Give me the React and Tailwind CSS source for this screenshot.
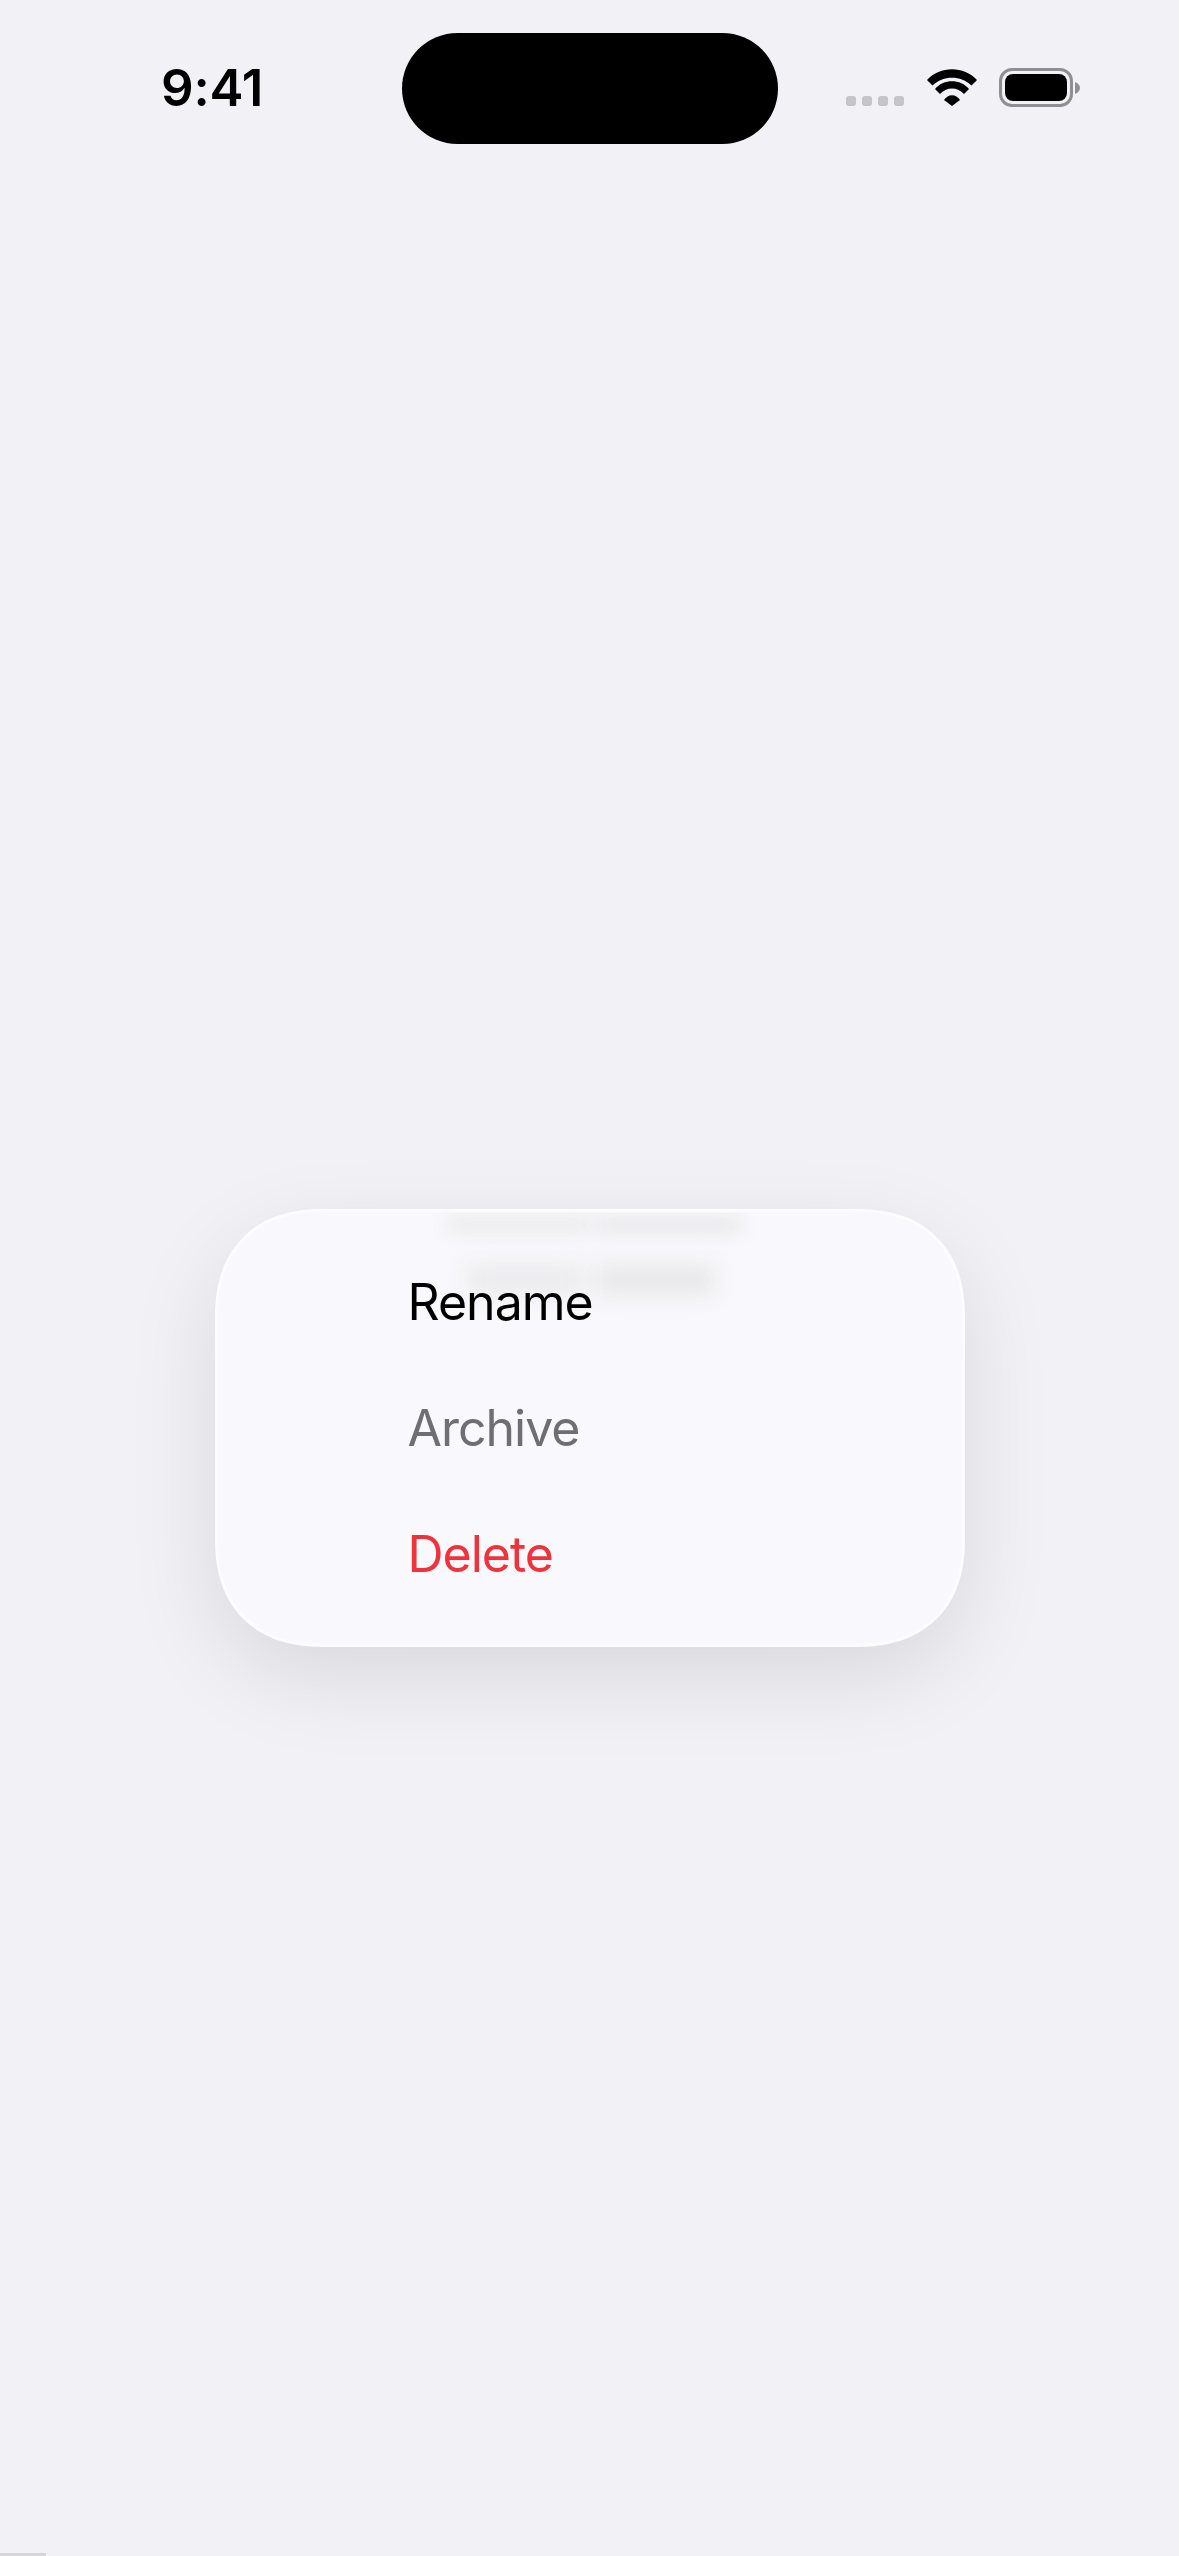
import React from 'react';

function Wifi() {
  return (
    <svg width="50" height="37" viewBox="0 0 50 37" fill="#000">
      <path d="M0 11 C13 -3.5 37 -3.5 50 11 L44.5 16.5 C34 6 16 6 5.5 16.5 Z" />
      <path d="M8 20 C16 9.5 34 9.5 42 20 L37 25 C31 17.5 19 17.5 13 25 Z" />
      <path d="M17 31 C21 24.5 29 24.5 33 31 L25 37 Z" />
    </svg>
  );
}

function Battery() {
  return (
    <div className="flex items-center gap-[2px]">
      <div className="w-[74px] h-[39px] rounded-[13px] border-[3px] border-[#8e8e93] p-[3px]">
        <div className="w-full h-full rounded-[8px] bg-black" />
      </div>
      <svg width="5" height="12" viewBox="0 0 5 12" fill="#8e8e93">
        <path d="M0 0 C3 1 5 3.5 5 6 C5 8.5 3 11 0 12 Z" />
      </svg>
    </div>
  );
}

function StatusBar() {
  return (
    <div className="h-[144px] flex items-start relative">
      <div className="ml-[161px] mt-[58px] text-[51px] leading-[60px] font-semibold text-black tracking-[-0.2px]">9:41</div>
      <div className="absolute left-[402px] top-[33px] w-[376px] h-[111px] rounded-[56px] bg-black" />
      <div className="absolute left-[846px] top-[68px] flex items-start">
        <div className="flex gap-[6px] mt-[28px] mr-[23px]">
          <div className="w-[10px] h-[10px] rounded-[3px] bg-[#c4c4c9]" />
          <div className="w-[10px] h-[10px] rounded-[3px] bg-[#c4c4c9]" />
          <div className="w-[10px] h-[10px] rounded-[3px] bg-[#c4c4c9]" />
          <div className="w-[10px] h-[10px] rounded-[3px] bg-[#c4c4c9]" />
        </div>
        <div className="mt-[1px]">
          <Wifi />
        </div>
        <div className="w-[22px]" />
        <Battery />
      </div>
    </div>
  );
}

export default function App() {
  return (
    <div className="w-[1179px] h-[2556px] overflow-hidden bg-[#f1f1f6] font-['Inter',sans-serif] flex flex-col">
      <StatusBar />
      <div className="flex justify-center pt-[1065px]">
        <div className="relative w-[750px] h-[438px] rounded-[108px] [corner-shape:superellipse(1.2)] border-[3px] border-[#fcfcfe] bg-[#f9f9fd] shadow-[0_30px_90px_rgba(0,0,0,0.1)] overflow-hidden">
          <div className="absolute left-[228px] top-[7px] w-[145px] h-[12px] bg-[#e6e6e8] blur-[9px]" />
          <div className="absolute left-[378px] top-[7px] w-[145px] h-[12px] bg-[#e2e2e4] blur-[9px]" />
          <div className="absolute left-[248px] top-[54px] w-[118px] h-[28px] bg-[#e9e9eb] blur-[12px]" />
          <div className="absolute left-[378px] top-[54px] w-[118px] h-[28px] bg-[#e5e5e7] blur-[12px]" />
          <div className="relative pl-[190px] pt-[27px] flex flex-col text-[50px] leading-[126px] tracking-[-1px]">
            <span className="text-black">Rename</span>
            <span className="text-[#6e6e73]">Archive</span>
            <span className="text-[#f0323c]">Delete</span>
          </div>
        </div>
      </div>
      <div className="mt-auto w-[46px] h-[3px] bg-[#d6d6da]" />
    </div>
  );
}
